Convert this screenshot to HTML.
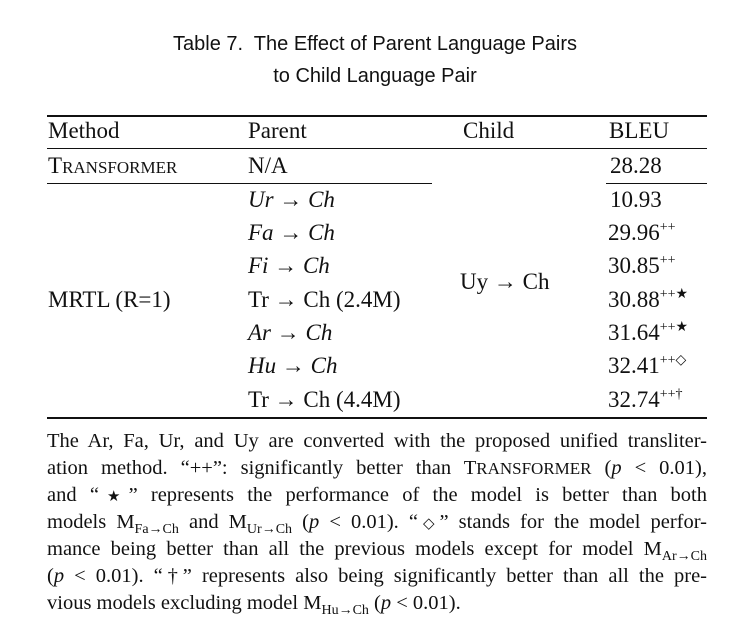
<!DOCTYPE html>
<html><head><meta charset="utf-8"><style>
body{margin:0;width:750px;height:638px;background:#fff;position:relative;overflow:hidden;font-family:"Liberation Serif",serif;color:#111}
.a{position:absolute;white-space:nowrap}
.t{font-family:"Liberation Sans",sans-serif;font-size:20px;width:750px;text-align:center;left:0}
.r{font-size:23px;line-height:26px}
.ln{position:absolute;background:#111}
.sc{font-size:17px}
sup{font-size:14px;vertical-align:0;position:relative;top:-9px}
.p{position:absolute;left:47px;width:660px;font-size:20.5px;line-height:27px;text-align:justify;text-align-last:justify;white-space:nowrap}
.p.l{text-align-last:left}
sub{font-size:14px;vertical-align:0;position:relative;top:5px}
i{font-style:italic}
.s{font-size:15px}
</style></head><body>
<div class="a t" style="top:33px">Table 7.&nbsp; The Effect of Parent Language Pairs</div>
<div class="a t" style="top:65px">to Child Language Pair</div>

<div class="ln" style="left:47px;top:115px;width:660px;height:1.5px"></div>
<div class="ln" style="left:47px;top:148px;width:660px;height:1px"></div>
<div class="ln" style="left:47px;top:183px;width:385px;height:1px"></div>
<div class="ln" style="left:606px;top:183px;width:101px;height:1px"></div>
<div class="ln" style="left:47px;top:417px;width:660px;height:1.5px"></div>

<div class="a r" style="left:48px;top:118px">Method</div>
<div class="a r" style="left:248px;top:118px">Parent</div>
<div class="a r" style="left:463px;top:118px">Child</div>
<div class="a r" style="left:609px;top:118px">BLEU</div>

<div class="a r" style="left:48px;top:153px">T<span class="sc">RANSFORMER</span></div>
<div class="a r" style="left:248px;top:153px">N/A</div>
<div class="a r" style="left:610px;top:153px">28.28</div>

<div class="a r" style="left:48px;top:287px">MRTL (R=1)</div>
<div class="a r" style="left:460px;top:269px">Uy → Ch</div>

<div class="a r" style="left:248px;top:187px"><i>Ur</i> → <i>Ch</i></div>
<div class="a r" style="left:248px;top:220px"><i>Fa</i> → <i>Ch</i></div>
<div class="a r" style="left:248px;top:253px"><i>Fi</i> → <i>Ch</i></div>
<div class="a r" style="left:248px;top:287px">Tr → Ch (2.4M)</div>
<div class="a r" style="left:248px;top:320px"><i>Ar</i> → <i>Ch</i></div>
<div class="a r" style="left:248px;top:353px"><i>Hu</i> → <i>Ch</i></div>
<div class="a r" style="left:248px;top:387px">Tr → Ch (4.4M)</div>

<div class="a r" style="left:610px;top:187px">10.93</div>
<div class="a r" style="left:608px;top:220px">29.96<sup>++</sup></div>
<div class="a r" style="left:608px;top:253px">30.85<sup>++</sup></div>
<div class="a r" style="left:608px;top:287px">30.88<sup>++★</sup></div>
<div class="a r" style="left:608px;top:320px">31.64<sup>++★</sup></div>
<div class="a r" style="left:608px;top:353px">32.41<sup>++◇</sup></div>
<div class="a r" style="left:608px;top:387px">32.74<sup>++†</sup></div>

<div class="p" style="top:428px">The Ar, Fa, Ur, and Uy are converted with the proposed unified transliter-</div>
<div class="p" style="top:455px">ation method. “++”: significantly better than T<span class="sc">RANSFORMER</span> (<i>p</i> &lt; 0.01),</div>
<div class="p" style="top:482px">and “<span class="s">★</span>” represents the performance of the model is better than both</div>
<div class="p" style="top:509px">models M<sub>Fa→Ch</sub> and M<sub>Ur→Ch</sub> (<i>p</i> &lt; 0.01). “<span class="s">◇</span>” stands for the model perfor-</div>
<div class="p" style="top:536px">mance being better than all the previous models except for model M<sub>Ar→Ch</sub></div>
<div class="p" style="top:563px">(<i>p</i> &lt; 0.01). “†” represents also being significantly better than all the pre-</div>
<div class="p l" style="top:590px">vious models excluding model M<sub>Hu→Ch</sub> (<i>p</i> &lt; 0.01).</div>
</body></html>
